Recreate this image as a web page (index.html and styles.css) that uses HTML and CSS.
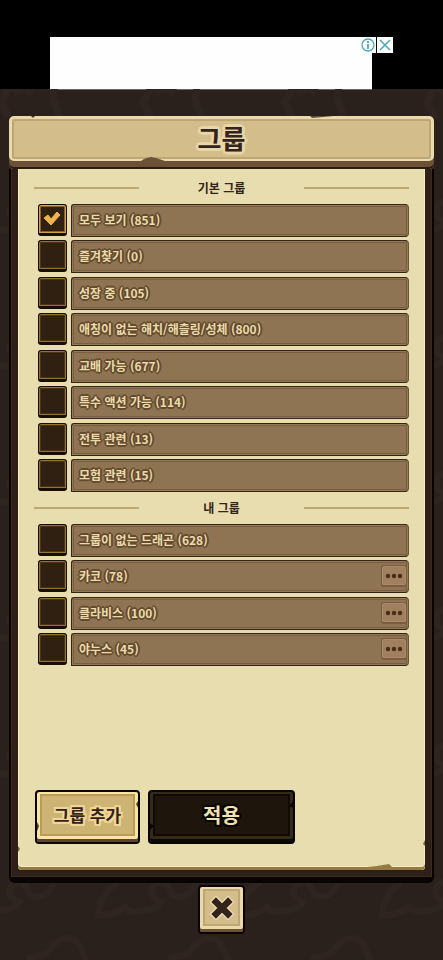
FILE: index.html
```html
<!DOCTYPE html>
<html lang="ko">
<head>
<meta charset="utf-8">
<meta name="viewport" content="width=device-width, initial-scale=1">
<title>그룹</title>
<link rel="stylesheet" href="styles.css">
</head>
<body>
<aside class="ad">
  <div class="ad-slot">
    <div class="ad-banner"></div>
    <div class="ad-tools">
      <button class="ad-tool" type="button" aria-label="광고 정보">
        <svg viewBox="0 0 16 16"><circle cx="8" cy="8" r="6" fill="none" stroke="#4fa6b9" stroke-width="1.3"/><path d="M8 4v2M8 7v5" stroke="#4fa6b9" stroke-width="1.8"/></svg>
      </button>
      <button class="ad-tool" type="button" aria-label="광고 닫기">
        <svg viewBox="0 0 16 16"><path d="M3 3l10 10M13 3L3 13" stroke="#4fa6b9" stroke-width="1.5"/></svg>
      </button>
    </div>
  </div>
</aside>

<main class="stage">
  <svg class="backdrop" aria-hidden="true">
    <defs>
      <pattern id="scales" width="142" height="136" patternUnits="userSpaceOnUse" x="-4" y="783">
        <g fill="none" stroke="#2f2420" stroke-width="6">
          <path d="M21 10C10 15 11 25 23 30C18 38 8 40 -6 38M21 10C33 7 29 25 40 25C50 24 55 20 59 9"/>
          <path d="M122 10C111 16 103 29 102 43C113 44 122 40 129 35C134 42 142 40 148 36"/>
          <path d="M31 87C42 82 50 86 55 76C62 66 75 63 81 70C87 77 87 84 91 90"/>
        </g>
      </pattern>
      <pattern id="ridges" width="142" height="40" patternUnits="userSpaceOnUse" x="0" y="0">
        <g fill="none" stroke="#2f2420" stroke-width="7">
          <path d="M9 -2L1 14L9 29M55 -2L53 10L60 28"/><path d="M151 -2L143 14L151 29"/>
        </g>
        <path d="M11 0H35L30 7L25 3L15 6z" fill="#2f2420"/>
      </pattern>
    </defs>
    <rect width="100%" height="28" fill="url(#ridges)"/>
    <rect y="28" width="100%" height="100%" fill="url(#scales)"/>
  </svg>

  <section class="panel">
    <header class="banner">
      <h1 class="banner-title">그룹</h1>
      <svg class="nick nick-top-left" viewBox="0 0 6 4"><path d="M1 0h4L3 2z" fill="#4c3927"/></svg>
      <svg class="nick nick-top-right" viewBox="0 0 24 3"><path d="M0 0h24L2 2z" fill="#654c32"/></svg>
      <svg class="nick nick-bottom" viewBox="0 0 24 6"><path d="M0 5L3 3L6 2L10 1L15 2L18 3L24 5v1H0z" fill="#6a5138"/></svg>
    </header>
    <div class="frame">
      <form class="sheet">
        <h2 class="section-title">기본 그룹</h2>
        <ul class="groups">
          <li class="group"><input class="tick" type="checkbox" id="g1" checked><svg class="tick-mark" viewBox="0 0 18 16"><path d="M1 7L5 4L8 8L14 1L17 4L8 14z" fill="#edb54b" stroke="#edb54b" stroke-linejoin="round"/></svg><div class="bar"><label class="name" for="g1">모두 보기 (851)</label></div></li>
          <li class="group"><input class="tick" type="checkbox" id="g2"><div class="bar"><label class="name" for="g2">즐겨찾기 (0)</label></div></li>
          <li class="group"><input class="tick" type="checkbox" id="g3"><div class="bar"><label class="name" for="g3">성장 중 (105)</label></div></li>
          <li class="group"><input class="tick" type="checkbox" id="g4"><div class="bar"><label class="name" for="g4">애칭이 없는 해치/해츨링/성체 (800)</label></div></li>
          <li class="group"><input class="tick" type="checkbox" id="g5"><div class="bar"><label class="name" for="g5">교배 가능 (677)</label></div></li>
          <li class="group"><input class="tick" type="checkbox" id="g6"><div class="bar"><label class="name" for="g6">특수 액션 가능 (114)</label></div></li>
          <li class="group"><input class="tick" type="checkbox" id="g7"><div class="bar"><label class="name" for="g7">전투 관련 (13)</label></div></li>
          <li class="group"><input class="tick" type="checkbox" id="g8"><div class="bar"><label class="name" for="g8">모험 관련 (15)</label></div></li>
        </ul>
        <h2 class="section-title">내 그룹</h2>
        <ul class="groups">
          <li class="group"><input class="tick" type="checkbox" id="m1"><div class="bar"><label class="name" for="m1">그룹이 없는 드래곤 (628)</label></div></li>
          <li class="group"><input class="tick" type="checkbox" id="m2"><div class="bar"><label class="name" for="m2">카코 (78)</label><button class="more" type="button" aria-label="카코 메뉴"><svg viewBox="0 0 18 6"><g fill="#4a2e14"><circle cx="3" cy="3" r="2.2"/><circle cx="9" cy="3" r="2.2"/><circle cx="15" cy="3" r="2.2"/></g></svg></button></div></li>
          <li class="group"><input class="tick" type="checkbox" id="m3"><div class="bar"><label class="name" for="m3">클라비스 (100)</label><button class="more" type="button" aria-label="클라비스 메뉴"><svg viewBox="0 0 18 6"><g fill="#4a2e14"><circle cx="3" cy="3" r="2.2"/><circle cx="9" cy="3" r="2.2"/><circle cx="15" cy="3" r="2.2"/></g></svg></button></div></li>
          <li class="group"><input class="tick" type="checkbox" id="m4"><div class="bar"><label class="name" for="m4">야누스 (45)</label><button class="more" type="button" aria-label="야누스 메뉴"><svg viewBox="0 0 18 6"><g fill="#4a2e14"><circle cx="3" cy="3" r="2.2"/><circle cx="9" cy="3" r="2.2"/><circle cx="15" cy="3" r="2.2"/></g></svg></button></div></li>
        </ul>
        <div class="actions">
          <button class="action action-add" type="button"><span class="action-face">그룹 추가</span>
            <svg class="chip chip-left" viewBox="0 0 4 10"><path d="M0 0L2 4L1 7L0 9z" fill="#5a4129"/></svg>
            <svg class="chip chip-right" viewBox="0 0 4 10"><path d="M4 1L2 4L3 6L4 8z" fill="#5a4129"/></svg>
          </button>
          <button class="action action-apply" type="submit"><span class="action-face">적용</span>
            <svg class="chip chip-left" viewBox="0 0 4 10"><path d="M0 1L4 4L0 8z" fill="#0b0703"/></svg>
            <svg class="chip chip-right" viewBox="0 0 4 10"><path d="M4 1L0 6L4 8z" fill="#0b0703"/></svg>
          </button>
        </div>
        <svg class="nick nick-sheet" viewBox="0 0 26 4"><path d="M0 3L10 2L22 0L26 4H0z" fill="#957a43"/></svg>
        <svg class="nick nick-left" viewBox="0 0 2 6"><path d="M0 0L2 3L0 6z" fill="#7d6235"/></svg>
        <svg class="nick nick-right" viewBox="0 0 2 6"><path d="M2 0L0 4L2 6z" fill="#7d6235"/></svg>
      </form>
    </div>
  </section>

  <button class="close" type="button" aria-label="닫기">
    <span class="close-face"><svg viewBox="0 0 28 28"><path d="M4 4L24 24M24 4L4 24" stroke="#ecdeb2" stroke-width="10"/><path d="M5 5L23 23M23 5L5 23" stroke="#33231a" stroke-width="7"/></svg></span>
  </button>
</main>
</body>
</html>
```

FILE: styles.css
```css
* { box-sizing: border-box; }

body {
  margin: 0;
  min-height: 100vh;
  display: flex;
  flex-direction: column;
  background: #2a211d;
  color: #33231a;
  font-family: "Noto Sans CJK KR", "Noto Sans", sans-serif;
  font-weight: 700;
}

button {
  margin: 0;
  padding: 0;
  border: 0;
  color: inherit;
  font: inherit;
  cursor: pointer;
}

svg { display: block; }

/* Ad strip */
.ad {
  padding: 37px 50px 0;
  background: #000;
}

.ad-slot {
  position: relative;
  max-width: 343px;
  margin: 0 auto;
  padding-right: 21px;
}

.ad-banner {
  height: 52px;
  background: #fefefe;
  box-shadow: 0 1px #6b6765;
}

.ad-tools {
  position: absolute;
  top: 0;
  right: 0;
  display: flex;
  gap: 1px;
}

.ad-tool {
  width: 16px;
  height: 16px;
  background: #fff;
}

/* Stage */
.stage {
  position: relative;
  flex: 1;
  display: flex;
  flex-direction: column;
  align-items: center;
  padding: 27px 9px 26px;
  overflow: hidden;
}

.backdrop {
  position: absolute;
  inset: 0;
  width: 100%;
  height: 100%;
}

.panel {
  position: relative;
  flex: 1;
  align-self: stretch;
  display: flex;
  flex-direction: column;
}

.banner {
  position: relative;
  height: 53px;
  padding: 3px 3px 10px;
  background: #ead9ab;
  border-radius: 5px;
  box-shadow: inset 0 -2px #2a1b10, inset 0 -8px #6a5138;
}

.banner-title {
  display: flex;
  align-items: center;
  justify-content: center;
  height: 40px;
  margin: 0;
  background: #d3be8b;
  border: 2px solid #bca775;
  border-radius: 2px;
  font-size: 26px;
  line-height: 34px;
  padding-bottom: 2px;
  text-shadow: -3px 0 #e8d6a8, 3px 0 #e8d6a8, 0 -3px #e8d6a8, 0 3px #e8d6a8, -2px -2px #e8d6a8, 2px -2px #e8d6a8, -2px 2px #e8d6a8, 2px 2px #e8d6a8;
}

.frame {
  flex: 1;
  display: flex;
  padding: 0 7px 7px;
  background: #2d2019;
  border: 2px solid #080402;
  border-top: 0;
  border-bottom-width: 6px;
  border-radius: 0 0 6px 6px;
  box-shadow: inset 1px -1px #3b2b23, inset -1px 0 #3b2b23;
}

.sheet {
  position: relative;
  flex: 1;
  display: flex;
  flex-direction: column;
  padding: 0 16px 26px;
  background: #e7ddae;
  border-radius: 0 0 4px 4px;
  box-shadow: inset 0 -3px #957a43, inset 1px -4px #f8edbf, inset -1px 0 #f8edbf;
}

.section-title {
  display: flex;
  align-items: center;
  justify-content: space-between;
  height: 32px;
  margin: 0;
  font-size: 12px;
  line-height: 20px;
}

.section-title:first-child {
  height: 35px;
  padding-top: 2px;
}

.section-title::before,
.section-title::after {
  content: "";
  width: 28%;
  height: 2px;
  background: #bda974;
}

/* Group rows */
.groups {
  display: grid;
  gap: 3px;
  margin: 0;
  padding: 0 0 0 4px;
  list-style: none;
}

.group {
  position: relative;
  display: flex;
  gap: 4px;
}

.group:nth-child(even):not(:last-child) { margin-bottom: 1px; }

.tick {
  appearance: none;
  flex: none;
  width: 29px;
  height: 32px;
  margin: 0;
  background: #302012;
  border: 1px solid #170e03;
  border-bottom-width: 3px;
  border-radius: 3px;
  box-shadow: inset 0 0 0 1px #927230, inset 0 0 0 2px #4a3413;
}

.tick:checked { box-shadow: inset 0 0 0 1px #d6a146, inset 0 0 0 2px #8a6427; }

.tick-mark {
  position: absolute;
  top: 7px;
  left: 5px;
  width: 18px;
  height: 16px;
  pointer-events: none;
}

.bar {
  flex: 1;
  display: flex;
  align-items: center;
  height: 33px;
  padding: 0 1px 2px 7px;
  background: #8e7452;
  border: 1px solid #352313;
  border-right-color: #6b5238;
  border-radius: 3px 4px 4px 1px;
  box-shadow: inset 0 0 0 1px #92795a, inset 0 0 0 2px #7b5d3f;
}

.name {
  flex: 1;
  color: #eadbab;
  font-size: 12px;
  line-height: 20px;
  text-shadow: -1px -1px #654b2f, 1px -1px #654b2f, -1px 1px #654b2f, 1px 1px #654b2f, -2px 0 #654b2f, 2px 0 #654b2f, 0 2px #654b2f, 0 -2px #654b2f;
}

.more {
  display: flex;
  justify-content: center;
  width: 26px;
  height: 22px;
  padding-top: 7px;
  background: #a18060;
  border: 1px solid #7b5c40;
  border-bottom-width: 2px;
  border-radius: 3px;
  box-shadow: inset 0 0 0 1px #aa8a68;
}

.more svg {
  width: 18px;
  height: 6px;
}

/* Buttons */
.actions {
  display: flex;
  gap: 8px;
  margin-top: auto;
  padding: 20px 0 0 1px;
}

.action {
  position: relative;
  height: 54px;
  padding: 2px 3px 6px;
  border: 2px solid #080402;
  border-radius: 4px;
}

.action-face {
  display: flex;
  align-items: center;
  justify-content: center;
  height: 42px;
  padding-bottom: 1px;
  border: 2px solid;
}

.action-add {
  width: 105px;
  background: #fae4a5;
  box-shadow: inset 0 -3px #5d432f;
  font-size: 17px;
}

.action-add .action-face {
  background: #ceb474;
  border-color: #b99c58;
  text-shadow: -2px 0 #f1d697, 2px 0 #f1d697, 0 -2px #f1d697, 0 2px #f1d697, -2px -2px #f1d697, 2px -2px #f1d697, -2px 2px #f1d697, 2px 2px #f1d697;
}

.action-apply {
  width: 147px;
  background: #35291a;
  box-shadow: inset 0 -3px #0b0703;
  color: #f2e2b3;
  font-size: 20px;
}

.action-apply .action-face {
  background: #1e160c;
  border-color: #100a04;
  text-shadow: -2px 0 #0b0703, 2px 0 #0b0703, 0 -2px #0b0703, 0 2px #0b0703, -2px -2px #0b0703, 2px -2px #0b0703, -2px 2px #0b0703, 2px 2px #0b0703;
}

.chip {
  position: absolute;
  width: 4px;
  height: 10px;
}

.chip-left { left: 0; bottom: 10px; }
.chip-right { right: 0; top: 8px; }

.close {
  position: relative;
  width: 47px;
  height: 49px;
  margin-top: 2px;
  padding: 2px 3px 6px;
  background: #ead9ab;
  border: 2px solid #080402;
  border-radius: 4px;
  box-shadow: inset 0 -3px #6a5138;
}

.close-face {
  display: grid;
  place-items: center;
  height: 37px;
  background: #d3be8b;
  border: 2px solid #bca775;
}

.close-face svg {
  width: 26px;
  height: 26px;
}

/* Worn edges */
.nick { position: absolute; }
.nick-top-left { left: 21px; top: 0; width: 6px; height: 4px; }
.nick-top-right { right: 100px; top: 0; width: 24px; height: 3px; }
.nick-bottom { left: 132px; bottom: 7px; width: 24px; height: 6px; }
.nick-sheet { right: 32px; bottom: 2px; width: 26px; height: 4px; }
.nick-left { left: 0; bottom: 18px; width: 2px; height: 6px; }
.nick-right { right: 0; bottom: 24px; width: 2px; height: 6px; }
```
